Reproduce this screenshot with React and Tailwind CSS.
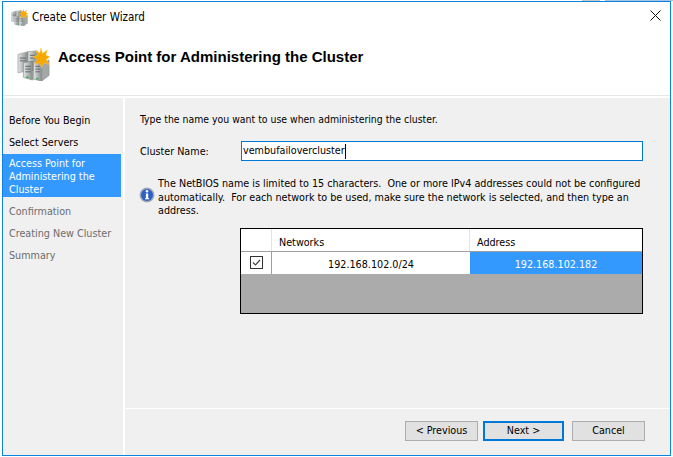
import React from 'react';

const font = { fontFamily: '"DejaVu Sans Condensed", "DejaVu Sans", sans-serif' };

const ServerIcon = ({ size, id }) => (
  <svg width={size} height={size} viewBox="0 0 36 36" className="shrink-0">
    <defs>
      <linearGradient id={id} x1="0" y1="0" x2="1" y2="0">
        <stop offset="0" stopColor="#e4e6e6" />
        <stop offset="1" stopColor="#858b8b" />
      </linearGradient>
    </defs>
    <path d="M1 7 L12 4 L12 25 L1 27 Z" fill={`url(#${id})`} stroke="#8a8f8f" strokeWidth="0.6" />
    <path d="M12 4 L22 3 L22 24 L12 25 Z" fill={`url(#${id})`} stroke="#8a8f8f" strokeWidth="0.6" />
    <path d="M7 16 L17 14 L17 35 L7 32 Z" fill={`url(#${id})`} stroke="#777" strokeWidth="0.6" />
    <path d="M18 15 L27 17 L27 36 L18 34 Z" fill={`url(#${id})`} stroke="#777" strokeWidth="0.6" />
    <path d="M27 17 L35 13 L35 30 L27 36 Z" fill="#a2a8a8" stroke="#888" strokeWidth="0.6" />
    <path d="M9 20h6M9 23h6M9 26h6M20 20h5M20 23h5M20 26h5M3 11h7M3 14h7M14 8h6M14 11h6" stroke="#5f6464" strokeWidth="1" />
    <rect x="10" y="31" width="2.4" height="1.8" fill="#35b04a" />
    <rect x="21" y="32.5" width="2.4" height="1.8" fill="#35b04a" />
    <path d="M26 0 L28 6 L33 2 L31.5 8 L36 9.5 L32 12.5 L35 18 L29 16 L27 22 L24.5 16 L19 18 L22 12.5 L17 9.5 L22.5 8 L20 2.5 L25 5.5 Z" fill="#f6a800" stroke="#fbd060" strokeWidth="0.5" />
  </svg>
);

const InfoIcon = () => (
  <svg width="16" height="16" viewBox="0 0 16 16" className="ml-[-1px] mt-[-4px] shrink-0">
    <circle cx="8" cy="8" r="7.5" fill="#a3abb8" />
    <circle cx="8" cy="8" r="6" fill="#2f5fc0" />
    <circle cx="8" cy="4.3" r="1.3" fill="#fff" />
    <rect x="6.9" y="6.5" width="2.3" height="5.2" fill="#fff" />
    <rect x="6" y="11.2" width="4.2" height="1.1" fill="#fff" />
  </svg>
);

const NavItem = ({ children, muted }) => (
  <div className={`h-[22px] pl-[6px] leading-[22px] ${muted ? 'text-[#6d6d6d]' : 'text-black'}`}>{children}</div>
);

const WizardButton = ({ children, primary, className = '' }) => (
  <button className={`flex h-[20px] items-center justify-center bg-[#e1e1e1] pt-px text-black ${primary ? 'w-[81px] border-2 border-[#0078d7]' : 'w-[73px] border border-[#adadad]'} ${className}`}>
    {children}
  </button>
);

export default function App() {
  return (
    <div className="flex h-[457px] w-[673px] flex-col overflow-hidden bg-white text-[10.7px]" style={font}>
      {/* sliver of the desktop behind the window */}
      <div className="flex h-px justify-end">
        <div className="mr-[5px] w-[18px] bg-[#c8c8c8]" />
        <div className="w-[68px] bg-[#a6c4e4]" />
      </div>
      <div className="ml-[2px] flex h-[455px] w-[669px] flex-col border border-[#0c84df] bg-white">
        {/* title bar */}
        <div className="flex h-[30px] items-center pl-[8px] pr-[9px]">
          <ServerIcon size={17} id="srv-small" />
          <span className="ml-[4px] pt-[2px] text-[11.5px] text-black">Create Cluster Wizard</span>
          <svg width="11" height="11" viewBox="0 0 11 11" className="ml-auto mt-[-3px]">
            <path d="M0.5 0.5 L10.5 10.5 M10.5 0.5 L0.5 10.5" stroke="#111" strokeWidth="1" />
          </svg>
        </div>

        {/* header */}
        <div className="flex h-[64px] items-start border-b border-[#e6e6e6] pl-[14px] pt-[16px]">
          <ServerIcon size={33} id="srv-large" />
          <span className="ml-[8px] mt-[-1px] text-[15px] font-bold leading-[20px] text-black" style={{ fontFamily: '"Liberation Sans", sans-serif' }}>
            Access Point for Administering the Cluster
          </span>
        </div>

        {/* body */}
        <div className="mt-[2px] flex min-h-0 flex-1">
          <div className="w-[120px] shrink-0 bg-[#f0f0f0] pt-[12px]">
            <NavItem>Before You Begin</NavItem>
            <NavItem>Select Servers</NavItem>
            <div className="mb-[4px] mr-[2px] bg-[#3399ff] pb-[1px] pl-[6px] pt-[3px] leading-[13px] text-white">
              Access Point for<br />Administering the<br />Cluster
            </div>
            <NavItem muted>Confirmation</NavItem>
            <NavItem muted>Creating New Cluster</NavItem>
            <NavItem muted>Summary</NavItem>
          </div>

          <div className="flex min-w-0 flex-1 flex-col border-l-2 border-white bg-[#f0f0f0]">
            <div className="flex h-[310px] flex-col pl-[15px] pr-[26px]">
              <div className="mt-[13px] h-[16px] whitespace-nowrap text-[10.4px] leading-[16px] text-black">Type the name you want to use when administering the cluster.</div>
              <div className="mt-[14px] flex h-[20px] items-center">
                <span className="w-[101px] pt-[2px] text-black">Cluster Name:</span>
                <div className="flex h-[20px] w-[402px] items-center border border-[#0078d7] bg-white pl-[1px] text-black">vembufailovercluster<span className="h-[15px] w-px bg-black" /></div>
              </div>
              <div className="mt-[16px] flex items-center">
                <InfoIcon />
                <p className="ml-[3px] whitespace-nowrap leading-[13.5px] text-black">
                  The NetBIOS name is limited to 15 characters.&nbsp; One or more IPv4 addresses could not be configured<br />
                  automatically.&nbsp; For each network to be used, make sure the network is selected, and then type an<br />
                  address.
                </p>
              </div>
              <div className="ml-[100px] mt-[10px] flex h-[86px] w-[403px] flex-col border border-black bg-[#ababab]">
                <div className="flex h-[23px] border-b border-[#a0a0a0] bg-white">
                  <div className="w-[31px] border-r border-[#e3e3e3]" />
                  <div className="w-[198px] border-r border-[#e3e3e3] pl-[7px] pt-[2px] leading-[24px] text-black">Networks</div>
                  <div className="flex-1 pl-[7px] pt-[2px] leading-[24px] text-black">Address</div>
                </div>
                <div className="flex h-[22px] bg-white">
                  <div className="flex w-[31px] items-center justify-center border-r border-[#a0a0a0]">
                    <svg width="13" height="13" viewBox="0 0 13 13">
                      <rect x="0.5" y="0.5" width="12" height="12" fill="#fff" stroke="#333" />
                      <path d="M3 6.5 L5.5 9 L10 4" fill="none" stroke="#444" strokeWidth="1.2" />
                    </svg>
                  </div>
                  <div className="w-[198px] text-center leading-[26px] text-black">192.168.102.0/24</div>
                  <div className="flex-1 bg-[#3399ff] text-center leading-[26px] text-white">192.168.102.182</div>
                </div>
              </div>
            </div>
            <div className="flex flex-1 items-start justify-end border-t border-white pr-[25px] pt-[12px]">
              <WizardButton>&lt; Previous</WizardButton>
              <WizardButton primary className="ml-[5px] mr-[8px]">Next &gt;</WizardButton>
              <WizardButton>Cancel</WizardButton>
            </div>
          </div>
        </div>
      </div>
    </div>
  );
}
